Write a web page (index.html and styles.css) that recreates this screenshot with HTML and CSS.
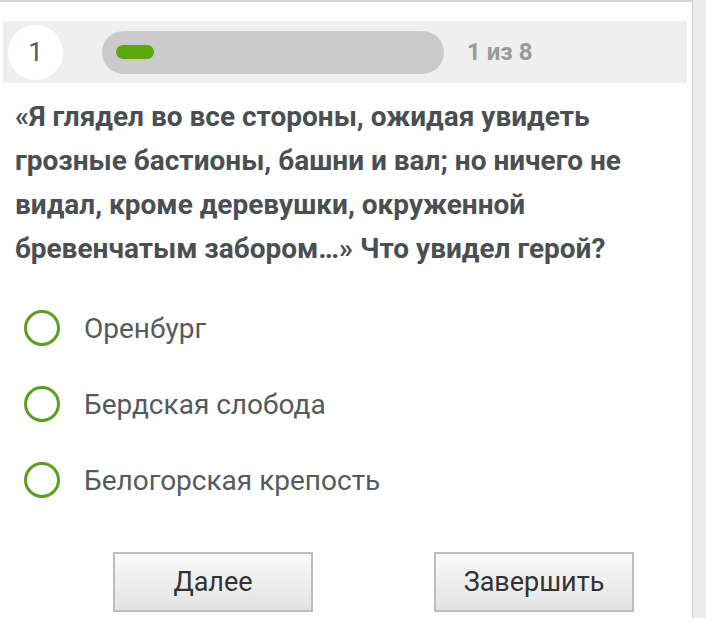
FILE: index.html
```html
<!DOCTYPE html>
<html>
<head>
  <title>Тест</title>
  <link rel="stylesheet" href="styles.css">
</head>
<body>

  <div class="quiz-card">
    <div class="quiz-head">
      <div class="quiz-num">1</div>
      <div class="progress">
        <div class="progress-fill"></div>
      </div>
      <div class="quiz-count">1 из 8</div>
    </div>

    <p class="question">«Я глядел во все стороны, ожидая увидеть грозные бастионы, башни и вал; но ничего не видал, кроме деревушки, окруженной бревенчатым забором…» Что увидел герой?</p>

    <ul class="answers">
      <li><span class="radio"></span>Оренбург</li>
      <li><span class="radio"></span>Бердская слобода</li>
      <li><span class="radio"></span>Белогорская крепость</li>
    </ul>

    <div class="buttons">
      <button>Далее</button>
      <button>Завершить</button>
    </div>
  </div>

</body>
</html>
```

FILE: styles.css
```css
body {
  margin: 0;
  font-family: Roboto, "Liberation Sans", sans-serif;
  background: linear-gradient(to right, #d9d9d9, #ececec);
  height: 618px;
  overflow: hidden;
}

.quiz-card {
  background: #fff;
  width: 693px;
  height: 618px;
  border-top: 2px solid #d4d4d4;
  border-right: 1px solid #cfcfcf;
  box-sizing: border-box;
  padding-top: 19px;
}

.quiz-head {
  display: flex;
  align-items: center;
  margin: 0 5px 0 3px;
  height: 62px;
  background: #efefef;
}

.quiz-num {
  width: 55px;
  height: 55px;
  margin-left: 5px;
  border-radius: 50%;
  background: #fff;
  color: #555;
  font-size: 26px;
  display: flex;
  align-items: center;
  justify-content: center;
}

.progress {
  width: 342px;
  height: 43px;
  margin-left: 39px;
  border-radius: 22px;
  background: #cbcbcb;
  display: flex;
  align-items: center;
  padding-left: 14px;
  box-sizing: border-box;
}

.progress-fill {
  width: 38px;
  height: 14px;
  border-radius: 7px;
  background: #5aa80e;
}

.quiz-count {
  margin-left: 23px;
  color: #9a9a9a;
  font-size: 24px;
  font-weight: bold;
}

.question {
  margin: 12px 0 0 15px;
  width: 660px;
  font-size: 28px;
  font-weight: bold;
  line-height: 44px;
  color: #4a4f54;
}

.answers {
  list-style: none;
  margin: 19px 0 0 0;
  padding: 0;
}

.answers li {
  display: flex;
  align-items: center;
  height: 76px;
  padding-left: 24px;
  font-size: 28px;
  color: #555a5e;
}

.radio {
  width: 30px;
  height: 30px;
  border: 3px solid #5c9e22;
  border-radius: 50%;
  margin-right: 24px;
}

.buttons {
  display: flex;
  margin-top: 34px;
  padding-left: 113px;
  gap: 121px;
}

.buttons button {
  width: 200px;
  height: 60px;
  font-family: Roboto, "Liberation Sans", sans-serif;
  font-size: 27px;
  color: #333;
  border: 2px solid #bdbdbd;
  background: linear-gradient(#fbfbfb, #e2e2e2);
  cursor: pointer;
}
```
